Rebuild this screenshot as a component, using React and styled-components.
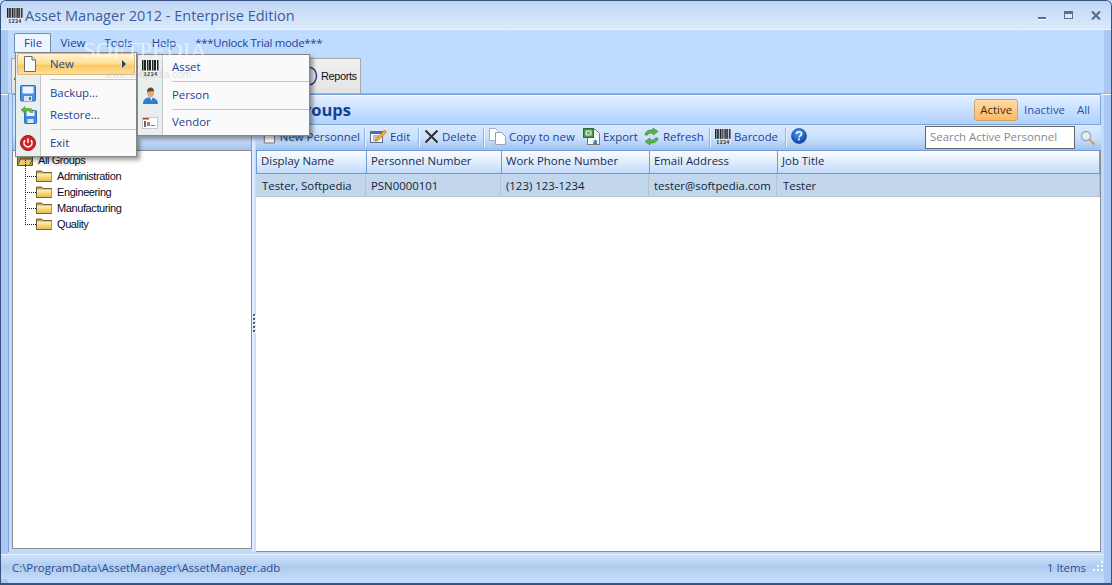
import React from "react";
import styled, { createGlobalStyle } from "styled-components";

const GlobalStyle = createGlobalStyle`
  html, body { margin: 0; padding: 0; background: #bfdbff; }
  * { box-sizing: border-box; }
`;

const UI = `"Open Sans", "Noto Sans", sans-serif`;
const ARIAL = `"Liberation Sans", Arial, sans-serif`;

function Barcode({ size = 17 }) {
  const bars = [0, 2, 3, 5, 7, 8, 10, 12, 13, 15];
  return (
    <svg width={size} height={size} viewBox="0 0 17 17">
      <rect width="17" height="17" fill="#fff" opacity="0.35" />
      {bars.map((x, i) => (
        <rect key={x} x={x} y="1" width={i % 3 === 0 ? 1.5 : 1} height="10.5" fill="#222" />
      ))}
      <text x="8.5" y="16.5" fontSize="5.4" fontWeight="700" textAnchor="middle" letterSpacing="0.3" fontFamily="Liberation Mono, monospace" fill="#222">1234</text>
    </svg>
  );
}

function Page({ size = 16 }) {
  return (
    <svg width={size} height={size} viewBox="0 0 16 16">
      <path d="M2.5.5h7.5l3.5 3.5v11.5h-11z" fill="#fdfdfd" stroke="#6a6a6a" />
      <path d="M10 .5v3.5h3.5" fill="#e4e4e4" stroke="#6a6a6a" />
    </svg>
  );
}

function Floppy() {
  return (
    <svg width="16" height="17" viewBox="0 0 16 17">
      <rect x=".5" y=".5" width="15" height="15.5" rx="1" fill="#4a8fe0" stroke="#2f6db8" />
      <rect x="2.5" y="1.5" width="11" height="7" fill="#eef5ff" />
      <rect x="4" y="11" width="8" height="5" fill="#d8e4f2" />
      <rect x="9" y="12" width="2" height="3" fill="#3f6fae" />
    </svg>
  );
}

function RestoreIcon() {
  return (
    <svg width="17" height="18" viewBox="0 0 17 18">
      <rect x="4.5" y="4.5" width="12" height="13" rx="1" fill="#3f8bdc" stroke="#2f6db8" />
      <rect x="6.5" y="5" width="8" height="5" fill="#eaf3ff" />
      <rect x="7.5" y="13" width="6" height="4" fill="#d8e4f2" />
      <path d="M1 4l4-3.5v2h5c2 0 3 1.500 3 4H10c0-1-.5-1.500-1.500-1.500h-3.500v2.500z" fill="#6bb04a" stroke="#4d8d33" strokeWidth=".5" />
    </svg>
  );
}

function PowerIcon() {
  return (
    <svg width="16" height="16" viewBox="0 0 16 16">
      <circle cx="8" cy="8" r="7.500" fill="#d5222a" stroke="#a51218" />
      <path d="M5 5.300a4 4 0 1 0 6 0" fill="none" stroke="#fff" strokeWidth="1.500" />
      <path d="M8 3.500v4.500" stroke="#fff" strokeWidth="1.500" />
    </svg>
  );
}

function PersonIcon() {
  return (
    <svg width="17" height="18" viewBox="0 0 17 18">
      <path d="M1 17c0-5 3-6.500 7-6.500s8 1.500 8 6.500z" fill="#2d7fd0" />
      <path d="M8 10.500l1.500 3 1-3z" fill="#fff" />
      <ellipse cx="8.500" cy="5.500" rx="3.500" ry="4.500" fill="#e2a878" />
      <path d="M5 5c0-3 1.500-4.500 3.500-4.500S12 2 12 4.500C10 4 7 4 5 5z" fill="#5e4632" />
    </svg>
  );
}

function VendorIcon() {
  return (
    <svg width="16" height="12" viewBox="0 0 16 12">
      <rect x=".5" y=".5" width="15" height="11" fill="#fff" stroke="#c8c8c8" />
      <rect x="1" y="1" width="6" height="1.500" fill="#c0392b" />
      <rect x="2" y="4" width="2" height="6" fill="#666" />
      <rect x="5" y="5" width="3" height="4" fill="#888" />
      <rect x="9" y="8" width="4" height="1" fill="#777" />
    </svg>
  );
}

function EditIcon() {
  return (
    <svg width="17" height="16" viewBox="0 0 17 16">
      <rect x=".5" y="3.500" width="12" height="11" fill="#f4f7fb" stroke="#5f6f86" />
      <rect x="1" y="4" width="11" height="2" fill="#4b6fa8" />
      <path d="M3 8h6M3 10h5M3 12h4" stroke="#7a8aa0" />
      <path d="M6 11l8.500-9 2 2L8 12.500 5.500 13.500z" fill="#f0b030" stroke="#a56a10" strokeWidth=".6" />
    </svg>
  );
}

function DeleteIcon() {
  return (
    <svg width="15" height="15" viewBox="0 0 15 15">
      <path d="M1.500 1.500l12 12M13.500 1.500l-12 12" stroke="#2e2e2e" strokeWidth="2" />
    </svg>
  );
}

function CopyIcon() {
  return (
    <svg width="17" height="17" viewBox="0 0 17 17">
      <path d="M.5.500h6l3 3v9h-9z" fill="#fff" stroke="#a9aebd" />
      <path d="M6.500 4.500h6l4 4v8h-10z" fill="#fff" stroke="#9aa0b0" />
    </svg>
  );
}

function ExportIcon() {
  return (
    <svg width="17" height="17" viewBox="0 0 17 17">
      <path d="M4.500 1.500h8l4 4v11h-12z" fill="#f7f7f7" stroke="#777" />
      <rect x=".5" y=".5" width="10" height="9" fill="#3f9a4d" stroke="#2c6b36" />
      <path d="M2.500 2.500h6v5h-6z" fill="#dff0dd" />
      <path d="M4 3.500l3 3M7 3.500l-3 3" stroke="#2c6b36" />
      <text x="10" y="15.500" fontSize="8" fontWeight="700" fontFamily="Liberation Serif, serif" fill="#1c4a86">a</text>
    </svg>
  );
}

function RefreshIcon() {
  return (
    <svg width="17" height="17" viewBox="0 0 17 17">
      <path d="M2 7c.5-3.500 3-5 6-5h2V0l5 3.500L10 7V5H8C6 5 5 6 4.800 7z" fill="#58b548" stroke="#2f7d2c" strokeWidth=".6" />
      <path d="M15 10c-.5 3.500-3 5-6 5H7v2L2 13.500 7 10v2h2c2 0 3-1 3.200-2z" fill="#58b548" stroke="#2f7d2c" strokeWidth=".6" />
    </svg>
  );
}

function HelpIcon() {
  return (
    <svg width="16" height="16" viewBox="0 0 16 16">
      <defs>
        <radialGradient id="helpBall" cx="45%" cy="30%" r="75%">
          <stop offset="0" stopColor="#4f9cf0" />
          <stop offset="1" stopColor="#0a3da0" />
        </radialGradient>
      </defs>
      <circle cx="8" cy="8" r="7.500" fill="url(#helpBall)" stroke="#0c3a8c" strokeWidth=".6" />
      <path d="M5.500 6c0-1.500 1-2.300 2.600-2.300s2.500.8 2.500 2.100c0 1.800-2.400 1.800-2.400 3.600" fill="none" stroke="#fff" strokeWidth="1.600" />
      <rect x="7" y="10.500" width="1.800" height="1.800" fill="#fff" />
    </svg>
  );
}

function SearchIcon() {
  return (
    <svg width="16" height="16" viewBox="0 0 16 16">
      <circle cx="6" cy="6" r="4.500" fill="#e6f0fa" stroke="#9aa6b4" strokeWidth="1.400" />
      <path d="M9.500 9.500l5 5" stroke="#e0a030" strokeWidth="2.200" />
    </svg>
  );
}

function Folder({ open }) {
  const id = open ? "folderOpen" : "folderShut";
  return (
    <svg width="16" height="12" viewBox="0 0 16 12">
      <defs>
        <linearGradient id={id} x1="0" y1="0" x2="0" y2="1">
          <stop offset="0" stopColor="#fff3b6" />
          <stop offset="1" stopColor="#eabb45" />
        </linearGradient>
      </defs>
      <path d="M.5 11.500v-10.500h5l1.500 1.500h8.500v9z" fill="#c9a650" stroke="#5e4d22" strokeWidth=".9" />
      {open ? (
        <path d="M.5 11.500l3-6.500h12l-3 6.500z" fill={`url(#${id})`} stroke="#5e4d22" strokeWidth=".9" />
      ) : (
        <rect x="1" y="3.500" width="14.500" height="7.600" fill={`url(#${id})`} />
      )}
    </svg>
  );
}

function ReportsIcon() {
  return (
    <svg width="16" height="20" viewBox="0 0 16 20">
      <ellipse cx="8" cy="10" rx="6.500" ry="8.500" fill="#e6e6ee" stroke="#2b3a78" strokeWidth="1.400" />
    </svg>
  );
}

const Window = styled.div`
  position: relative;
  width: 1112px;
  height: 585px;
  display: flex;
  flex-direction: column;
  overflow: hidden;
  background: linear-gradient(90deg, #aac8f0 0, #aac8f0 7px, #bfdbff 7px, #bfdbff calc(100% - 7px), #aac8f0 calc(100% - 7px));
  border: 1px solid #34537e;
  border-bottom-width: 2px;
  border-radius: 6px 6px 0 0;
  font-family: ${UI};
  font-size: 11.4px;
  color: #1d4390;
`;

const TitleBar = styled.div`
  height: 28px;
  display: flex;
  align-items: center;
  gap: 2px;
  padding-left: 6px;
  background: linear-gradient(#bcd3f1 0, #c9ddf7 30%, #dbe9fb 100%);
  font-size: 14.5px;
  color: #3d5c9f;
`;

const TitleText = styled.span`
  flex: 1;
  white-space: nowrap;
`;

const WindowButtons = styled.div`
  display: flex;
  align-items: center;
  gap: 18px;
  padding-right: 10px;
`;

const MinGlyph = styled.i`
  display: block;
  width: 8px;
  height: 3px;
  margin-top: 6px;
  background: linear-gradient(#59708f 60%, #fff 60%);
`;

const MaxGlyph = styled.i`
  display: block;
  width: 9px;
  height: 8px;
  border: 1px solid #59708f;
  border-top-width: 3px;
  background: #dbe9fb;
`;

const MenuBar = styled.div`
  height: 26px;
  display: flex;
  align-items: flex-end;
  padding-left: 13px;
  padding-bottom: 2px;
  border-top: 1px solid #e9f2fd;
`;

const MenuItem = styled.div`
  height: 20px;
  padding: 0 9.500px 2px;
  display: flex;
  align-items: center;
  white-space: nowrap;
  letter-spacing: ${(p) => (p.$tight ? "-0.3px" : "0")};
  ${(p) => p.$open && `
    background: #eef5ff;
    border: 1px solid #7a8da8;
    border-bottom: none;
    border-radius: 2px 2px 0 0;
    padding: 0 9px 2px;
    width: 37px;
  `}
`;

const TabStrip = styled.div`
  height: 38px;
  display: flex;
  align-items: flex-end;
  padding-left: 10px;
`;

const Tab = styled.div`
  width: ${(p) => p.$w}px;
  height: 35px;
  display: flex;
  align-items: center;
  gap: 3px;
  padding-left: 2px;
  background: linear-gradient(#f0f0f0, #e4e4e4);
  border: 1px solid #a8a8a8;
  border-bottom: none;
  font-family: ${ARIAL};
  font-size: 11px;
  letter-spacing: -0.4px;
  color: #111;
`;

const TabPage = styled.div`
  flex: 1;
  min-height: 0;
  display: flex;
  padding: 0 10px 0 7px;
  border-top: 1px solid #9fb0c6;
  box-shadow: inset 0 1px 0 #fff;
`;

const SideFrame = styled.div`
  width: 4px;
  background: #bfdbff;
  border-left: 1px solid #7fa4d6;
`;

const LeftPanel = styled.div`
  width: 240px;
  margin-bottom: 3px;
  display: flex;
  flex-direction: column;
`;

const LeftHeader = styled.div`
  height: 56px;
  flex-shrink: 0;
  background: linear-gradient(#cfe2fb 0, #dbe9fd 70%, #a3c5f2 100%);
  border: 1px solid #7ba6dc;
  border-bottom: none;
`;

const TreeBox = styled.div`
  flex: 1;
  background: #fff;
  border: 1px solid #8d8d8d;
  padding-top: 1px;
  font-family: ${ARIAL};
  font-size: 11px;
  letter-spacing: -0.4px;
  color: #0b0b28;
`;

const TreeRow = styled.div`
  position: relative;
  height: 16px;
  display: flex;
  align-items: center;
  padding-left: ${(p) => (p.$child ? 23 : 4)}px;
  ${(p) => p.$child && `
    &::before {
      content: "";
      position: absolute;
      left: 12px;
      top: -8px;
      width: 10px;
      height: 16px;
      border-left: 1px dotted #222;
      border-bottom: 1px dotted #222;
    }
  `}
`;

const TreeLabel = styled.span`
  margin-left: 5px;
  ${(p) => p.$root && `background: #f3f3f3; padding: 0 1px; margin-left: 4px;`}
`;

const Splitter = styled.div`
  width: 4px;
  display: flex;
  flex-direction: column;
  justify-content: center;
  align-items: center;
  gap: 2px;
  background: linear-gradient(90deg, #e8f2ff, #bfdbff);
`;

const GripDot = styled.i`
  display: block;
  width: 2px;
  height: 2px;
  background: #4f5f78;
  box-shadow: 1px 1px 0 #fff;
`;

const RightPanel = styled.div`
  flex: 1;
  min-width: 0;
  display: flex;
  flex-direction: column;
`;

const PanelHeader = styled.div`
  height: 31px;
  flex-shrink: 0;
  display: flex;
  align-items: center;
  padding: 0 5px 0 9px;
  background: linear-gradient(#e3efff, #afd2ff);
  border: 1px solid #7ba6dc;
  box-shadow: inset 0 1px 0 #f4f9ff;
`;

const PanelTitle = styled.div`
  flex: 1;
  font-size: 16.500px;
  font-weight: 700;
  color: #15428b;
`;

const FilterButton = styled.div`
  height: 22px;
  display: flex;
  align-items: center;
  padding: 0 5px;
  margin-left: ${(p) => p.$gap || 0}px;
  color: ${(p) => (p.$active ? "#3c2a08" : "#2f4fa5")};
  ${(p) => p.$active && `
    background: linear-gradient(#ffdca4, #fdb968);
    border: 1px solid #c9a46b;
    border-radius: 3px;
  `}
`;

const Toolbar = styled.div`
  height: 25px;
  flex-shrink: 0;
  display: flex;
  align-items: center;
  padding-left: 2px;
  background: linear-gradient(#dceafe 0, #c8dffc 55%, #9fc2f0 100%);
`;

const ToolButton = styled.div`
  width: ${(p) => p.$w}px;
  flex-shrink: 0;
  display: flex;
  align-items: center;
  gap: 3px;
  padding: 0 0 3px 4px;
  white-space: nowrap;
`;

const ToolSep = styled.i`
  display: block;
  width: 1px;
  height: 19px;
  margin: 0 1px 0 4px;
  background: #8fb5e6;
  box-shadow: 1px 0 0 #eef5ff;
`;

const SearchBox = styled.div`
  width: 150px;
  height: 23px;
  margin-left: auto;
  display: flex;
  align-items: center;
  padding: 0 0 3px 4px;
  background: #fff;
  border: 1px solid #666;
  color: #85898f;
`;

const SearchButton = styled.div`
  width: 26px;
  display: flex;
  justify-content: center;
`;

const GridBox = styled.div`
  flex: 1;
  background: #fff;
  border-right: 1px solid #8d8d8d;
  border-bottom: 1px solid #8d8d8d;
`;

const GridRow = styled.div`
  display: grid;
  grid-template-columns: 110px 135px 148px 128px 1fr;
`;

const HeadCell = styled.div`
  height: 24px;
  display: flex;
  align-items: center;
  padding: 0 0 3px 4px;
  background: linear-gradient(#fbfdff, #c3dcfc);
  border-top: 1px solid #6f9bd8;
  border-bottom: 1px solid #6f9bd8;
  border-left: 1px solid #6f9bd8;
  color: #1a2a50;
  &:last-child { border-right: 1px solid #6f9bd8; }
`;

const BodyCell = styled.div`
  height: 23px;
  display: flex;
  align-items: center;
  padding-left: ${(p) => p.$pad}px;
  background: #c2d7ec;
  border-right: 1px solid #b4c2d2;
  border-bottom: 1px solid #b4c2d2;
  color: #141f38;
`;

const StatusBar = styled.div`
  height: 25px;
  margin: 2px 7px 4px 0;
  display: flex;
  align-items: center;
  justify-content: space-between;
  padding: 0 1px 0 11px;
  background: linear-gradient(#cfe2f9 0, #aecbef 50%, #c4dbf7 100%);
  border-top: 1px solid #e7f1fd;
  color: #2b4c92;
`;

const StatusRight = styled.div`
  display: flex;
  align-items: center;
  gap: 5px;
`;

const Grip = styled.div`
  width: 12px;
  height: 12px;
  display: grid;
  grid-template-columns: repeat(3, 2px);
  grid-template-rows: repeat(3, 2px);
  gap: 2px;
  justify-content: end;
`;

const GripCell = styled.i`
  display: block;
  background: ${(p) => (p.$on ? "#f3f8ff" : "transparent")};
`;

const Dropdown = styled.div`
  position: absolute;
  left: ${(p) => p.$x}px;
  top: ${(p) => p.$y}px;
  width: ${(p) => p.$w}px;
  z-index: ${(p) => p.$z};
  padding-bottom: ${(p) => p.$bottom}px;
  color: #1d4390;
  background: linear-gradient(90deg, #e9eeee 0, #e9eeee 24px, #c5c5c5 24px, #c5c5c5 25px, #fafafa 25px);
  border: 1px solid #868686;
  box-shadow: 3px 3px 4px rgba(0, 0, 0, 0.38);
`;

const DropItem = styled.div`
  position: relative;
  height: ${(p) => p.$h}px;
  display: flex;
  align-items: center;
  ${(p) => p.$hot && `
    margin: 0 1px;
    background: linear-gradient(#fff3d0 0, #ffe09a 45%, #fdc860 60%, #fde0a0 100%);
    border: 1px solid #d8b878;
    border-radius: 2px;
  `}
`;

const DropIcon = styled.div`
  width: 24px;
  flex-shrink: 0;
  display: flex;
  justify-content: center;
`;

const DropLabel = styled.span`
  margin: 0 0 2px ${(p) => p.$gap}px;
`;

const Arrow = styled.i`
  position: absolute;
  right: 8px;
  top: 6px;
  width: 0;
  height: 0;
  border-left: 4px solid #15428b;
  border-top: 4px solid transparent;
  border-bottom: 4px solid transparent;
`;

const DropSep = styled.div`
  height: 1px;
  margin: ${(p) => p.$m};
  background: #c5c5c5;
`;

const Watermark = styled.div`
  position: absolute;
  left: 82px;
  top: 37px;
  z-index: 5;
  font-family: "Liberation Serif", serif;
  font-size: 23px;
  color: rgba(255, 255, 255, 0.55);
  pointer-events: none;
`;

const WatermarkUrl = styled.div`
  position: absolute;
  left: 104px;
  top: 68px;
  z-index: 5;
  font-family: "Liberation Sans", sans-serif;
  font-size: 10px;
  color: rgba(190, 190, 190, 0.45);
  pointer-events: none;
`;

const columns = ["Display Name", "Personnel Number", "Work Phone Number", "Email Address", "Job Title"];
const record = [
  ["Tester, Softpedia", 6],
  ["PSN0000101", 5],
  ["(123) 123-1234", 5],
  ["tester@softpedia.com", 5],
  ["Tester", 6],
];
const groups = ["Administration", "Engineering", "Manufacturing", "Quality"];

export default function App() {
  return (
    <>
      <GlobalStyle />
      <Window>
        <TitleBar>
          <Barcode size={16} />
          <TitleText>Asset Manager 2012 - Enterprise Edition</TitleText>
          <WindowButtons>
            <MinGlyph />
            <MaxGlyph />
            <svg width="10" height="9" viewBox="0 0 10 9">
              <path d="M1 .5l8 8M9 .5l-8 8" stroke="#59708f" strokeWidth="2.200" />
            </svg>
          </WindowButtons>
        </TitleBar>

        <MenuBar>
          <MenuItem $open>File</MenuItem>
          <MenuItem>View</MenuItem>
          <MenuItem>Tools</MenuItem>
          <MenuItem>Help</MenuItem>
          <MenuItem $tight>***Unlock Trial mode***</MenuItem>
        </MenuBar>

        <TabStrip>
          <Tab $w={96}>Assets</Tab>
          <Tab $w={96}>Personnel</Tab>
          <Tab $w={96}>Vendors</Tab>
          <Tab $w={62}>
            <ReportsIcon />
            Reports
          </Tab>
        </TabStrip>

        <TabPage>
          <SideFrame />
          <LeftPanel>
            <LeftHeader />
            <TreeBox>
              <TreeRow>
                <Folder open />
                <TreeLabel $root>All Groups</TreeLabel>
              </TreeRow>
              {groups.map((g) => (
                <TreeRow $child key={g}>
                  <Folder />
                  <TreeLabel>{g}</TreeLabel>
                </TreeRow>
              ))}
            </TreeBox>
          </LeftPanel>

          <Splitter>
            {[0, 1, 2, 3, 4].map((n) => (
              <GripDot key={n} />
            ))}
          </Splitter>

          <RightPanel>
            <PanelHeader>
              <PanelTitle>All Groups</PanelTitle>
              <FilterButton $active>Active</FilterButton>
              <FilterButton $gap={1}>Inactive</FilterButton>
              <FilterButton $gap={2}>All</FilterButton>
            </PanelHeader>

            <Toolbar>
              <ToolButton $w={102}>
                <Page size={16} />
                New Personnel
              </ToolButton>
              <ToolSep />
              <ToolButton $w={48}>
                <EditIcon />
                Edit
              </ToolButton>
              <ToolSep />
              <ToolButton $w={59}>
                <DeleteIcon />
                Delete
              </ToolButton>
              <ToolSep />
              <ToolButton $w={94}>
                <CopyIcon />
                Copy to new
              </ToolButton>
              <ToolButton $w={60}>
                <ExportIcon />
                Export
              </ToolButton>
              <ToolButton $w={66}>
                <RefreshIcon />
                Refresh
              </ToolButton>
              <ToolSep />
              <ToolButton $w={70}>
                <Barcode size={16} />
                Barcode
              </ToolButton>
              <ToolSep />
              <ToolButton $w={24}>
                <HelpIcon />
              </ToolButton>
              <SearchBox>Search Active Personnel</SearchBox>
              <SearchButton>
                <SearchIcon />
              </SearchButton>
            </Toolbar>

            <GridBox>
              <GridRow>
                {columns.map((c) => (
                  <HeadCell key={c}>{c}</HeadCell>
                ))}
              </GridRow>
              <GridRow>
                {record.map(([text, pad]) => (
                  <BodyCell key={text} $pad={pad}>
                    {text}
                  </BodyCell>
                ))}
              </GridRow>
            </GridBox>
          </RightPanel>
        </TabPage>

        <StatusBar>
          <span>{"C:\\ProgramData\\AssetManager\\AssetManager.adb"}</span>
          <StatusRight>
            1 Items
            <Grip>
              {[0, 0, 1, 0, 1, 1, 1, 1, 1].map((on, i) => (
                <GripCell key={i} $on={on} />
              ))}
            </Grip>
          </StatusRight>
        </StatusBar>

        <Dropdown $x={14} $y={51} $w={122} $z={3} $bottom={2}>
          <DropItem $h={22} $hot>
            <DropIcon>
              <Page />
            </DropIcon>
            <DropLabel $gap={8}>New</DropLabel>
            <Arrow />
          </DropItem>
          <DropSep $m="4px 0 2px 34px" />
          <DropItem $h={22}>
            <DropIcon>
              <Floppy />
            </DropIcon>
            <DropLabel $gap={10}>Backup...</DropLabel>
          </DropItem>
          <DropItem $h={22}>
            <DropIcon>
              <RestoreIcon />
            </DropIcon>
            <DropLabel $gap={10}>Restore...</DropLabel>
          </DropItem>
          <DropSep $m="3px 0 2px 34px" />
          <DropItem $h={22}>
            <DropIcon>
              <PowerIcon />
            </DropIcon>
            <DropLabel $gap={10}>Exit</DropLabel>
          </DropItem>
        </Dropdown>

        <Dropdown $x={136} $y={53} $w={173} $z={4} $bottom={0}>
          <DropItem $h={25}>
            <DropIcon>
              <Barcode />
            </DropIcon>
            <DropLabel $gap={10}>Asset</DropLabel>
          </DropItem>
          <DropSep $m="1px 0 0 34px" />
          <DropItem $h={27}>
            <DropIcon>
              <PersonIcon />
            </DropIcon>
            <DropLabel $gap={10}>Person</DropLabel>
          </DropItem>
          <DropSep $m="0 0 0 34px" />
          <DropItem $h={25}>
            <DropIcon>
              <VendorIcon />
            </DropIcon>
            <DropLabel $gap={10}>Vendor</DropLabel>
          </DropItem>
        </Dropdown>

        <Watermark>SOFTPEDIA</Watermark>
        <WatermarkUrl>www.softpedia.com</WatermarkUrl>
      </Window>
    </>
  );
}
